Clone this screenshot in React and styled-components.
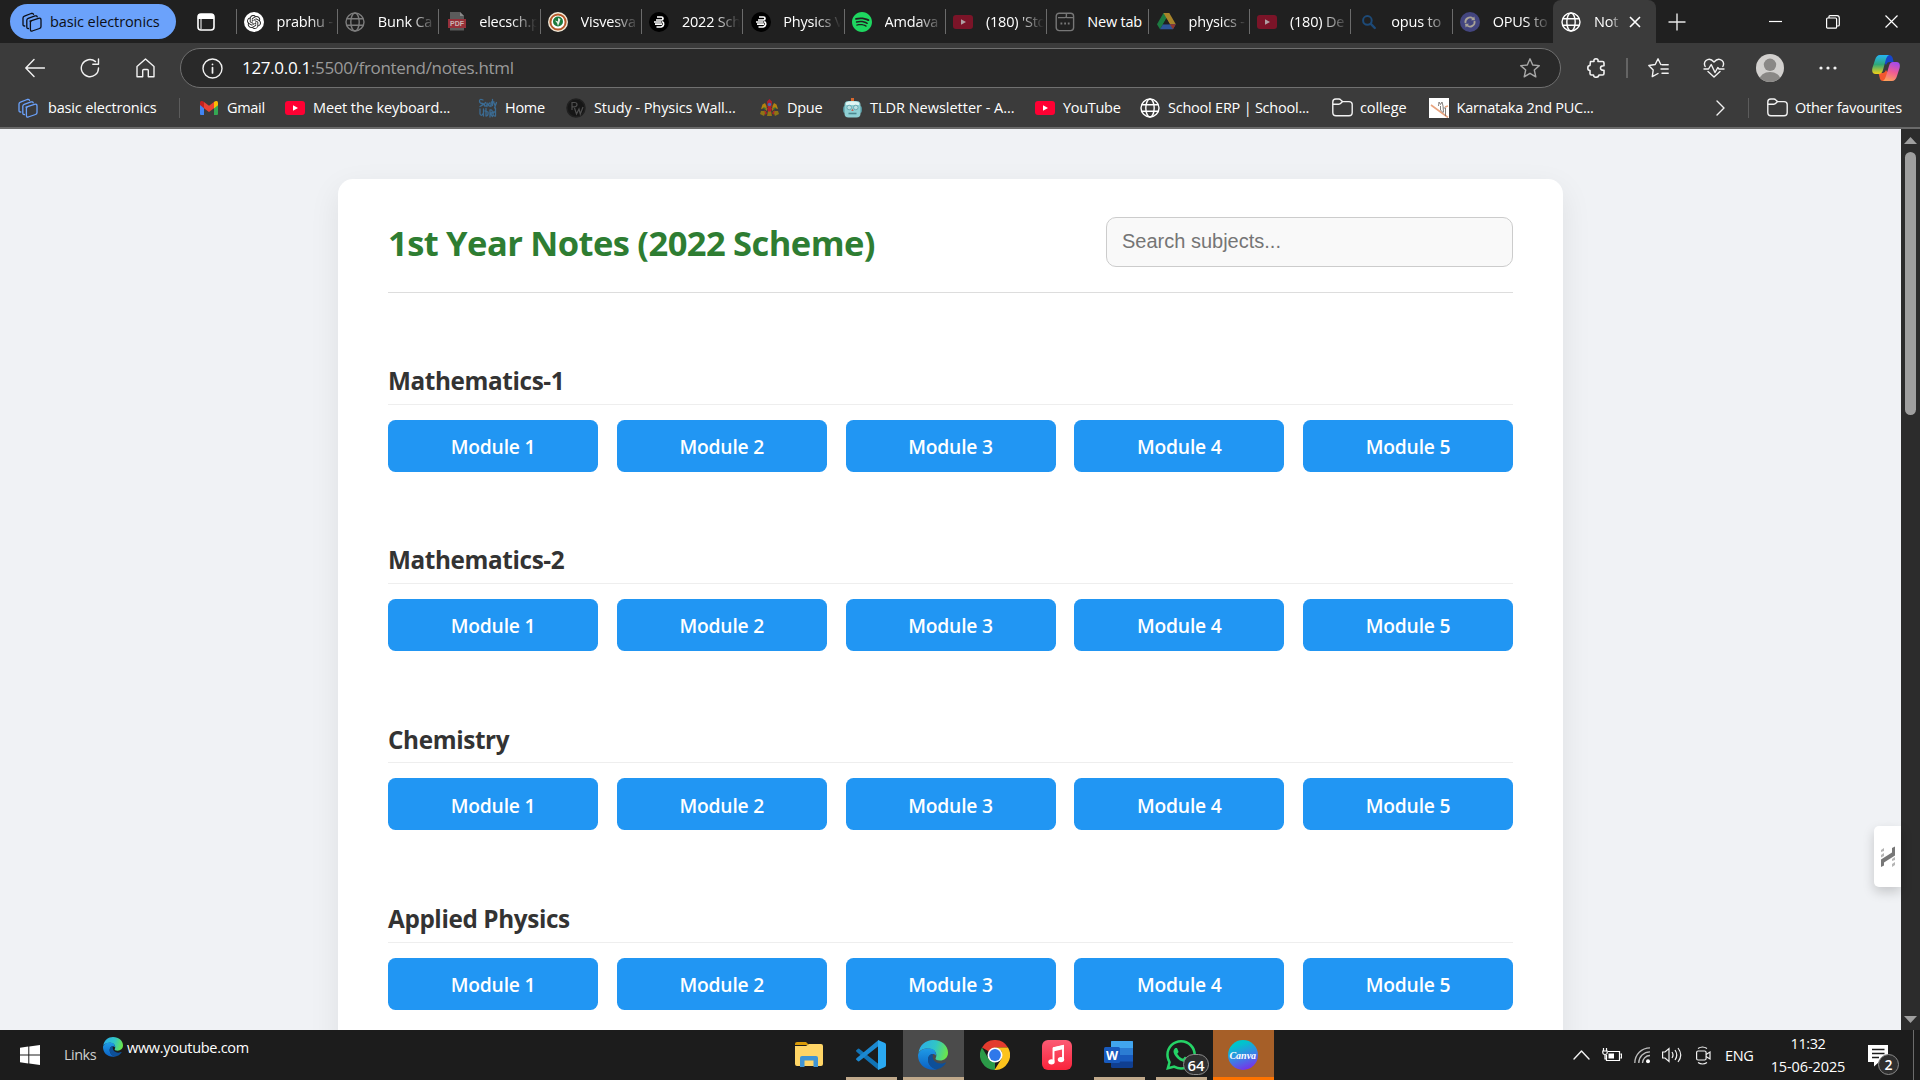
import React from "react";
import styled, { createGlobalStyle } from "styled-components";
import { SiOpenai, SiSpotify, SiWhatsapp } from "react-icons/si";

const ui = `"Open Sans", "Noto Sans", sans-serif`;

const Global = createGlobalStyle`
  * { box-sizing: border-box; }
  html, body { margin: 0; padding: 0; overflow: hidden; background: #1c1c1c; }
  body { font-family: ${ui}; }
`;

const Screen = styled.div`
  width: 1920px;
  height: 1080px;
  display: flex;
  flex-direction: column;
  overflow: hidden;
`;

/* ---------- tab strip ---------- */
const TabStrip = styled.header`
  height: 43px;
  flex: none;
  display: flex;
  align-items: stretch;
  background: #202020;
`;
const WorkspacePill = styled.button`
  margin: 4px 0 4px 10px;
  width: 166px;
  height: 35px;
  padding: 0 0 0 12px;
  border: 0;
  border-radius: 18px;
  background: #6ba2fb;
  display: flex;
  align-items: center;
  gap: 8px;
  font: 14.5px ${ui};
  letter-spacing: -0.1px;
  color: #0c0f16;
  white-space: nowrap;
`;
const TabActions = styled.div`
  width: 59.5px;
  display: grid;
  place-items: center;
  color: #fff;
`;
const Tab = styled.div`
  width: 101.35px;
  flex: none;
  display: flex;
  align-items: center;
  position: relative;
  padding-left: 8.5px;
  &::before {
    content: "";
    position: absolute;
    left: 0;
    top: 9px;
    width: 1px;
    height: 25px;
    background: #6b6b6b;
  }
`;
const ActiveTab = styled(Tab)`
  width: 103px;
  background: #3b3b3b;
  border-radius: 8px 8px 0 0;
  &::before { display: none; }
`;
const TabIcon = styled.span`
  width: 20px;
  height: 20px;
  flex: none;
  display: grid;
  place-items: center;
`;
const TabTitle = styled.span`
  margin-left: 12.5px;
  width: ${(p) => p.$w || 58}px;
  white-space: nowrap;
  font-size: 14.5px;
  line-height: 22px;
  letter-spacing: -0.2px;
  color: #fff;
  mask-image: ${(p) => (p.$full ? "none" : "linear-gradient(90deg, #000 55%, transparent 100%)")};
`;
const TabClose = styled.span`
  margin-left: 7.5px;
  display: flex;
`;
const NewTab = styled.span`
  width: 43px;
  display: grid;
  place-items: center;
`;
const WindowControls = styled.div`
  margin-left: auto;
  display: flex;
`;
const WinButton = styled.span`
  width: 58px;
  display: grid;
  place-items: center;
`;

/* ---------- toolbar ---------- */
const Toolbar = styled.div`
  height: 49px;
  flex: none;
  display: flex;
  align-items: center;
  padding-left: 7px;
  background: #3b3b3b;
`;
const ToolButton = styled.span`
  width: ${(p) => p.$w || 55}px;
  height: 40px;
  padding-left: ${(p) => p.$pad || 0}px;
  display: grid;
  place-items: center;
  flex: none;
`;
const AddressBar = styled.div`
  width: 1381px;
  flex: none;
  height: 40px;
  margin-left: 7px;
  margin-top: 1px;
  border: 1px solid #707070;
  border-radius: 20px;
  background: #292929;
  display: flex;
  align-items: center;
  padding: 0 20px 0 21px;
`;
const Url = styled.span`
  margin: 0 0 2px 19px;
  flex: 1;
  font-size: 17px;
  letter-spacing: -0.32px;
  color: #9a9a9a;
  b { font-weight: 400; color: #fff; }
`;
const ToolDivider = styled.span`
  width: 2px;
  flex: none;
  height: 20px;
  background: #646464;
`;

/* ---------- bookmarks ---------- */
const Bookmarks = styled.nav`
  height: 37px;
  flex: none;
  display: flex;
  align-items: center;
  padding: 0 0 4px 18px;
  background: #3b3b3b;
  border-bottom: 2px solid #6a6a6a;
`;
const Bookmark = styled.a`
  display: flex;
  align-items: center;
  gap: ${(p) => p.$gap ?? 8}px;
  width: ${(p) => p.$w}px;
  flex: none;
  white-space: nowrap;
  font-size: 14.5px;
  letter-spacing: ${(p) => p.$ls ?? -0.3}px;
  color: #fff;
`;
const BookIcon = styled.span`
  width: 20px;
  height: 20px;
  flex: none;
  display: grid;
  place-items: center;
`;
const BookDivider = styled.span`
  width: 1px;
  height: 20px;
  background: #5c5c5c;
  margin-right: ${(p) => p.$gap || 18}px;
`;
const Overflow = styled.span`
  margin-left: auto;
  width: 32px;
  display: flex;
`;

/* ---------- page ---------- */
const Viewport = styled.div`
  height: 901px;
  flex: none;
  display: flex;
  overflow: hidden;
  position: relative;
`;
const Page = styled.main`
  flex: 1;
  background: #f0f2f5;
  padding-top: 50px;
  overflow: hidden;
`;
const Card = styled.section`
  width: 1225px;
  height: 1100px;
  margin: 0 auto;
  padding: 37.5px 50px;
  border-radius: 15px;
  background: #fff;
  box-shadow: 0 10px 31px rgba(0, 0, 0, 0.08);
`;
const Header = styled.div`
  display: flex;
  justify-content: space-between;
  align-items: center;
  height: 76px;
  padding-bottom: 25px;
  border-bottom: 1px solid #ddd;
  margin-bottom: 63px;
`;
const Title = styled.h1`
  margin: 1px 0 0;
  font-size: 34.5px;
  font-weight: 700;
  letter-spacing: -0.55px;
  word-spacing: -0.5px;
  color: #2e7d32;
  white-space: nowrap;
`;
const Search = styled.input`
  width: 407px;
  height: 50px;
  border: 1px solid #ccc;
  border-radius: 10px;
  background: #f9f9f9;
  padding: 0 15px;
  font: 20px "Liberation Sans", Arial, sans-serif;
  &::placeholder { color: #757575; opacity: 1; }
`;
const Subject = styled.section`
  height: 179.4px;
`;
const SubjectTitle = styled.h2`
  margin: 0 0 15px;
  height: 49px;
  padding-top: 8.6px;
  border-bottom: 1px solid #eee;
  font-size: 24.3px;
  line-height: 34px;
  font-weight: 700;
  letter-spacing: -0.38px;
  color: #333;
`;
const Modules = styled.div`
  display: grid;
  grid-template-columns: repeat(5, 1fr);
  gap: 18.75px;
`;
const Module = styled.button`
  height: 52px;
  border: 0;
  padding: 2px 0 0;
  border-radius: 7.5px;
  background: #2196f3;
  color: #fff;
  font: 600 19.3px ${ui};
  letter-spacing: -0.2px;
`;
const Scrollbar = styled.div`
  width: 19px;
  flex: none;
  background: #2c2c2c;
  display: flex;
  flex-direction: column;
  align-items: center;
  padding: 8px 0 7px;
`;
const Thumb = styled.div`
  width: 11px;
  height: 263px;
  margin: 8px 0 auto;
  border-radius: 6px;
  background: #9f9f9f;
`;
const SideWidget = styled.div`
  position: absolute;
  right: 19px;
  top: 697px;
  width: 27px;
  height: 61px;
  border-radius: 5px 0 0 5px;
  background: #fff;
  box-shadow: 0 5px 12px rgba(0, 0, 0, 0.18);
  display: grid;
  place-items: center;
`;

/* ---------- taskbar ---------- */
const Taskbar = styled.footer`
  height: 50px;
  flex: none;
  display: flex;
  background: #1c1c1c;
  color: #fff;
`;
const LinksArea = styled.div`
  width: 779px;
  display: flex;
  padding-left: 20px;
`;
const StartButton = styled.span`
  width: 44px;
  padding-top: 15px;
`;
const LinksLabel = styled.span`
  width: 39px;
  padding-top: 15px;
  font-size: 14.5px;
  line-height: 20px;
  letter-spacing: -0.5px;
  color: #cfcfcf;
`;
const LinkItem = styled.span`
  display: flex;
  height: 20px;
  margin-top: 7px;
  gap: 4px;
  font-size: 14.5px;
  line-height: 21px;
  letter-spacing: -0.3px;
`;
const AppButton = styled.span`
  width: 61px;
  margin-right: 1px;
  padding-right: 1.5px;
  display: grid;
  place-items: center;
  position: relative;
  background: ${(p) => p.$bg || "transparent"};
  &::after {
    content: "";
    position: absolute;
    bottom: 0;
    left: ${(p) => (p.$bg ? 0 : 5)}px;
    right: ${(p) => (p.$bg ? 0 : 5)}px;
    height: 3px;
    background: ${(p) => p.$line || "transparent"};
  }
`;
const Badge = styled.span`
  position: absolute;
  right: ${(p) => p.$right}px;
  bottom: 5px;
  width: ${(p) => p.$w}px;
  height: 21px;
  border: 1px solid #8a8a8a;
  border-radius: 11px;
  background: #2f2f2f;
  display: grid;
  place-items: center;
  font-size: ${(p) => p.$size || 14}px;
  font-weight: 600;
  line-height: 18px;
`;
const CanvaLogo = styled.span`
  width: 30px;
  height: 30px;
  border-radius: 50%;
  background: linear-gradient(160deg, #00c4cc 20%, #3b82e6 55%, #7d2ae8 92%);
  display: grid;
  place-items: center;
  font: italic 700 10px "Liberation Serif", serif;
  color: #fff;
`;
const Tray = styled.div`
  margin-left: auto;
  display: flex;
  align-items: center;
  width: 347px;
`;
const TrayItem = styled.span`
  width: ${(p) => p.$w}px;
  flex: none;
  display: flex;
  font-size: 14.5px;
  letter-spacing: -0.4px;
`;
const Clock = styled.div`
  width: 76px;
  text-align: center;
  font-size: 14.5px;
  line-height: 23px;
  letter-spacing: -0.1px;
  white-space: nowrap;
  div:first-child { letter-spacing: -0.4px; }
`;
const Notifications = styled.span`
  position: relative;
  width: 45px;
  height: 50px;
  margin-left: 22px;
  padding-top: 15px;
`;
const DesktopEdge = styled.span`
  width: 1px;
  height: 50px;
  background: #6b6b6b;
`;

/* ---------- drawings ---------- */
const Drawing = styled.svg`
  display: block;
`;
const Svg = ({ s = 20, w, h, vb, children, ...r }) => (
  <Drawing width={w || s} height={h || s} viewBox={vb || `0 0 ${w || s} ${h || s}`} fill="none" {...r}>
    {children}
  </Drawing>
);
const line = { stroke: "#f2f2f2", strokeWidth: 1.4, strokeLinecap: "round", strokeLinejoin: "round" };

const Workspace = ({ c }) => (
  <Svg stroke={c} strokeWidth="1.3" strokeLinejoin="round" strokeLinecap="round">
    <path d="M8 9.2 L16.5 6.3 Q19 5.6 19 8 V14.5 Q19 16 17.5 16.5 L10.2 19 Q8.4 19.5 8.4 17.6 V10.4 Q8.4 9.3 9.4 8.8" />
    <path d="M6.5 16.5 Q4.8 16.8 4.8 15 V8.2 Q4.8 6.8 6.2 6.3 L13 3.9 Q14.8 3.4 15.2 4.9" />
    <path d="M2.8 14 Q1 14.2 1 12.5 V6 Q1 4.6 2.4 4.1 L9.2 1.5 Q11 1 11.5 2.4" />
  </Svg>
);
const Globe = ({ c = "#fff" }) => (
  <Svg stroke={c} strokeWidth="1.4">
    <circle cx="10" cy="10" r="9" />
    <ellipse cx="10" cy="10" rx="4.2" ry="9" />
    <path d="M1.8 6.8H18.2M1.8 13.2H18.2" />
  </Svg>
);
const Youtube = ({ dim }) => (
  <Svg w={20} h={14}>
    <rect width="20" height="14" rx="3" fill={dim ? "#7b1428" : "#ff0033"} />
    <path d="M8 4.2 13 7 8 9.8Z" fill={dim ? "#b0a0a4" : "#fff"} />
  </Svg>
);
const Pdf = () => (
  <Svg w={20} h={20}>
    <path d="M3 0H13L17 4V10H3Z" fill="#5b5b5b" />
    <path d="M13 0V4H17Z" fill="#8a8a8a" />
    <rect x="1" y="7" width="18" height="9" fill="#96303a" />
    <rect x="3" y="16" width="14" height="2.5" fill="#5b5b5b" />
    <text x="10" y="14" fontSize="7" fontWeight="700" textAnchor="middle" fill="#c9b4b4" fontFamily="Liberation Sans">PDF</text>
  </Svg>
);
const Crest = () => (
  <Svg>
    <circle cx="10" cy="10" r="10" fill="#f3ead8" />
    <circle cx="10" cy="10" r="7.6" fill="#fff" stroke="#b5592a" strokeWidth="2" />
    <circle cx="10" cy="9.5" r="5" fill="#1d7a3c" />
    <path d="M10 14 9 11 7 8.500 10 9.500 10 6 12.500 7 11.300 11Z" fill="#e8f1e6" />
  </Svg>
);
const Bee = () => (
  <Svg>
    <circle cx="10" cy="10" r="10" fill="#000" />
    <path d="M8 5H12.5Q14 5 14 6.4T12.6 8H7M5 10H12.5M7 8H12M6 12.2H13M13.2 9.5Q15 10.5 14.6 12.5T12 15H7.5" stroke="#fff" strokeWidth="1.7" />
  </Svg>
);
const NewTabPage = () => (
  <Svg stroke="#777" strokeWidth="1.4">
    <rect x="1.2" y="1.2" width="17.4" height="17.4" rx="3" />
    <path d="M3 5.6H10Q11.4 5.6 11.4 4.2V2M11.4 5.6H18.5" />
    <path d="M5.5 11.5H7.3M9.2 11.5H11M12.8 11.5H14.6" strokeWidth="2" />
  </Svg>
);
const Drive = () => (
  <Svg w={19} h={17}>
    <path d="M6.5 0H12.3L6 11.2 3 16.2 0 11.2Z" fill="#1c7a41" />
    <path d="M6.5 0H12.3L18.8 11.2H12.8Z" fill="#a8842a" />
    <path d="M6 11.2H18.8L16 16.2H3Z" fill="#2d5599" />
    <path d="M16 16.2 18.8 11.2H12.8Z" fill="#93352c" />
    <path d="M9.4 5.4 12.8 11.2H6Z" fill="#202020" />
  </Svg>
);
const Magnifier = () => (
  <Svg w={16} h={16} stroke="#1d4a78" strokeLinecap="round">
    <circle cx="6.4" cy="6.4" r="4.3" strokeWidth="2" />
    <path d="M9.8 9.8 13.8 14" strokeWidth="2.4" />
  </Svg>
);
const Convert = () => (
  <Svg>
    <circle cx="10" cy="10" r="10" fill="#43457f" />
    <path d="M5.5 11A4.6 4.6 0 0 1 13 6.6M14.5 9A4.6 4.6 0 0 1 7 13.4" stroke="#a9a397" strokeWidth="1.8" />
    <path d="M11 8.3 15 8.2 14.3 4.6ZM9 11.7 5 11.8 5.7 15.4Z" fill="#a9a397" />
  </Svg>
);
const Gmail = () => (
  <Svg w={18} h={14}>
    <path d="M0 2V13Q0 14 1 14H4V5Z" fill="#4285f4" />
    <path d="M18 2V13Q18 14 17 14H14V5Z" fill="#34a853" />
    <path d="M14 1 18 2V4L14 7.2Z" fill="#fbbc04" />
    <path d="M4 1 9 4.8 14 1V7.2L9 11 4 7.2Z" fill="#ea4335" />
    <path d="M0 2Q0-.8 3 .3L4 1V7.2L0 4Z" fill="#c5221f" />
    <path d="M18 2Q18-.8 15 .3L14 1V7.2L18 4Z" fill="#fbbc04" />
  </Svg>
);
const Scribble = () => (
  <Svg w={19} h={20} stroke="#3b6c94" strokeWidth="1.3" strokeLinecap="round" strokeLinejoin="round">
    <path d="M5 2Q1.500 .5 1.500 3T4.500 5.500 2 8.500M7.500 4.500Q5 8 7.500 8T9 5V8.500M11.500 5Q9.500 7.500 11.500 8T13 5V8.500M14.500 1.500V7.500M13.500 4H16M16 5 17 7.500 18.500 4.500 16.500 10" />
    <path d="M2 11V16Q3.500 19 5.500 15V11V18M8 10.500V18Q10.500 18 10 14L7 13M12 19V12Q15 11.500 14 15L12 15 14.500 18.500M17.500 10V18Q14 18.500 15.500 14L17.500 14" />
  </Svg>
);
const PW = () => (
  <Svg>
    <circle cx="10" cy="10" r="9" fill="#161616" stroke="#202020" strokeWidth="1.5" />
    <path d="M6 12V4.500H8.500Q11 4.500 11 6.500T8.500 8.800H6M8.500 10 10.500 16 13 11 14.300 16 17 9" stroke="#4f4f4f" strokeWidth="1.2" />
  </Svg>
);
const Emblem = () => (
  <Svg w={19} h={18}>
    <path d="M9.500 0 12 2.500 11.500 8 9.500 11 7.500 8 7 2.500Z" fill="#b3202b" />
    <path d="M5 4 2.500 5.500 1 10 4 9 7 12 6.500 7ZM14 4 16.500 5.500 18 10 15 9 12 12 12.500 7Z" fill="#b5810f" />
    <path d="M1 12H6L4 17 0 15ZM18 12H13L15 17 19 15ZM8 12H11L12 17H7Z" fill="#8f7414" />
    <path d="M4 11 7 14 5.500 16ZM15 11 12 14 13.500 16ZM7 9H12L11 12.500H8Z" fill="#b3202b" />
    <circle cx="9.500" cy="5.500" r="1.700" fill="#4968b0" />
    <path d="M3 8 6 9 5 11ZM16 8 13 9 14 11Z" fill="#2c7a35" />
  </Svg>
);
const Robot = () => (
  <Svg w={19} h={20}>
    <rect x="8" y="0" width="3" height="4" fill="#d8672d" />
    <rect x="0" y="8" width="19" height="7" rx="2" fill="#539098" />
    <rect x="1.5" y="3" width="16" height="16.500" rx="4" fill="#8fd0d4" />
    <path d="M3 4.500Q9 2 16 4.500V7H3Z" fill="#dff5f3" />
    <circle cx="6.200" cy="9.500" r="2.300" fill="#b9e0e2" stroke="#6ba9b2" />
    <circle cx="12.800" cy="9.500" r="2.300" fill="#b9e0e2" stroke="#6ba9b2" />
    <path d="M9.500 10.500 10.700 13H8.300Z" fill="#c56050" />
    <path d="M5.500 15.500H13.500" stroke="#4a8890" strokeWidth="1.600" />
  </Svg>
);
const Folder = () => (
  <Svg w={21} h={19} stroke="#f2f2f2" strokeWidth="1.4" strokeLinejoin="round">
    <path d="M.8 4Q.8 1 3.800 1H6.800Q8 1 8.800 1.900L10.500 3.600H17Q20.200 3.600 20.200 6.600V14.600Q20.200 17.800 17 17.800H4Q.8 17.800 .8 14.600Z" />
    <path d="M.8 6.200H6.800Q8 6.200 8.800 5.300L10.500 3.600" />
  </Svg>
);
const Sketch = () => (
  <Svg>
    <rect width="20" height="20" fill="#fff" />
    <path d="M2 7 19 19.500M16 9 19 8" stroke="#e9a47f" strokeWidth="1.600" />
    <path d="M9.500 8 10 4 11.500 6.500 13 4 14 8 14.500 14M11.500 8V12L14.500 15M16.500 10V18M14.500 10H16.500" stroke="#77726e" strokeWidth=".9" />
  </Svg>
);
const Edge = ({ s }) => (
  <Svg s={s} vb="0 0 30 30">
    <defs>
      <linearGradient id="eg" x1="0" y1=".3" x2="1" y2=".5"><stop offset="0" stopColor="#2aaeea" /><stop offset=".55" stopColor="#31c5c6" /><stop offset="1" stopColor="#6be649" /></linearGradient>
      <linearGradient id="eb" x1="0" y1="0" x2="0" y2="1"><stop offset="0" stopColor="#1f9be6" /><stop offset="1" stopColor="#0b61c4" /></linearGradient>
    </defs>
    <path d="M.5 13C1.500 5 8 0 15 0 24 0 30 6 30 12.500 30 18 26 20.500 22 20.500 18.500 20.500 17 19.500 17.600 18.300 19.800 14.500 17.500 9 11 8.500 5.500 8.300 1.500 10.500 .5 13Z" fill="url(#eg)" />
    <path d="M0 15.500C0 11.500 5 8.300 10.500 8.300 16.500 8.300 19 13 17.500 15.500 15.500 12.300 10 14.500 10 19.500 10 25 14.500 28.500 19 29.400 7.500 31.500 0 24 0 15.500Z" fill="url(#eb)" />
    <path d="M10 19.500C10 16 12.500 13.500 15 14 13.500 19 17 23.500 23 23.500 25.500 23.500 27.500 22 28.200 22.600 26 26.500 22 29 18.500 29.400 14 28.500 10 25 10 19.500Z" fill="#0d4f98" />
  </Svg>
);
const Copilot = () => (
  <Svg w={28} h={26}>
    <defs>
      <linearGradient id="c1" x1="0" y1="0" x2="0" y2="1"><stop offset="0" stopColor="#25b5f5" /><stop offset=".5" stopColor="#30a878" /><stop offset="1" stopColor="#f2d117" /></linearGradient>
      <linearGradient id="c2" x1=".6" y1="0" x2=".3" y2="1"><stop offset="0" stopColor="#a64bea" /><stop offset=".5" stopColor="#f05c93" /><stop offset="1" stopColor="#fba05b" /></linearGradient>
    </defs>
    <path d="M14 0H17Q20 0 21 4L21.500 7H17Q15 7 14 10L11 6Z" fill="#1746c9" />
    <path d="M14 26H11Q8 26 7.500 22L6.500 18H11Q13 18 14 15L17 20Z" fill="#f2572e" />
    <path d="M8 0H17Q15 1 14 4L11 15Q10 19 6.500 19H3.500Q-.8 19 .4 13L3 5Q4.500 0 8 0Z" fill="url(#c1)" />
    <path d="M20 26H11Q13 25 14 21L17 11Q18 7 21 7H24.500Q28.800 7 27.600 13L25 21Q23.500 26 20 26Z" fill="url(#c2)" />
  </Svg>
);

const tabs = [
  { icon: <Svg><circle cx="10" cy="10" r="10" fill="#fff" /><SiOpenai x="3" y="3" size={14} color="#222" /></Svg>, title: "prabhu -" },
  { icon: <Globe c="#7c7c7c" />, title: "Bunk Ca" },
  { icon: <Pdf />, title: "elecsch.p" },
  { icon: <Crest />, title: "Visvesva" },
  { icon: <Bee />, title: "2022 Sch" },
  { icon: <Bee />, title: "Physics V" },
  { icon: <SiSpotify size={20} color="#1ed760" />, title: "Amdava" },
  { icon: <Youtube dim />, title: "(180) 'Sto" },
  { icon: <NewTabPage />, title: "New tab", full: true },
  { icon: <Drive />, title: "physics -" },
  { icon: <Youtube dim />, title: "(180) De" },
  { icon: <Magnifier />, title: "opus to" },
  { icon: <Convert />, title: "OPUS to" },
];

const bookmarks = [
  { icon: <Gmail />, label: "Gmail", w: 86, ls: -0.3 },
  { icon: <Youtube />, label: "Meet the keyboard...", w: 192, ls: -0.09 },
  { icon: <Scribble />, label: "Home", w: 89 },
  { icon: <PW />, label: "Study - Physics Wall...", w: 193, ls: -0.08 },
  { icon: <Emblem />, label: "Dpue", w: 83 },
  { icon: <Robot />, label: "TLDR Newsletter - A...", w: 193, ls: -0.02 },
  { icon: <Youtube />, label: "YouTube", w: 105 },
  { icon: <Globe />, label: "School ERP | School...", w: 192, ls: -0.23 },
  { icon: <Folder />, label: "college", w: 96.5, ls: -0.1 },
  { icon: <Sketch />, label: "Karnataka 2nd PUC...", w: 180, ls: -0.25 },
];

const subjects = ["Mathematics-1", "Mathematics-2", "Chemistry", "Applied Physics"];

export default function App() {
  return (
    <Screen>
      <Global />
      <TabStrip>
        <WorkspacePill><Workspace c="#0c0f16" />basic electronics</WorkspacePill>
        <TabActions>
          <Svg w={18} h={18}><rect x="1" y="1" width="16" height="16" rx="3" stroke="#fff" strokeWidth="1.6" /><path d="M1 6V3.500Q1 1 3.500 1H14.500Q17 1 17 3.500V6Z" fill="#fff" /><path d="M4 6V16" stroke="#fff" /></Svg>
        </TabActions>
        {tabs.map((t, i) => (
          <Tab key={i}><TabIcon>{t.icon}</TabIcon><TabTitle $full={t.full}>{t.title}</TabTitle></Tab>
        ))}
        <ActiveTab>
          <TabIcon><Globe /></TabIcon>
          <TabTitle $w={28}>Not</TabTitle>
          <TabClose><Svg w={12} h={12} stroke="#fff" strokeWidth="1.6"><path d="M1 1 11 11M11 1 1 11" /></Svg></TabClose>
        </ActiveTab>
        <NewTab><Svg w={18} h={18} stroke="#e8e8e8" strokeWidth="1.4"><path d="M9 .5V17.500M.5 9H17.500" /></Svg></NewTab>
        <WindowControls>
          <WinButton><Svg w={13} h={13} stroke="#fff" strokeWidth="1.2"><path d="M0 6.500H13" /></Svg></WinButton>
          <WinButton><Svg w={14} h={14} stroke="#fff" strokeWidth="1.2"><rect x=".6" y="3" width="10" height="10.200" rx="1" /><path d="M3 3V1.600Q3 .6 4 .6H11Q13.300 .6 13.300 3V10Q13.300 11 12 11H10.800" /></Svg></WinButton>
          <WinButton><Svg w={13} h={13} stroke="#fff" strokeWidth="1.2"><path d="M.5 .5 12.500 12.500M12.500 .5 .5 12.500" /></Svg></WinButton>
        </WindowControls>
      </TabStrip>

      <Toolbar>
        <ToolButton><Svg {...line}><path d="M19.500 10H1M9 1.500 .8 10 9 18.500" /></Svg></ToolButton>
        <ToolButton><Svg {...line}><path d="M18.500 10A8.600 8.600 0 1 1 15.500 3.600M18.500 1V6.200H12.800" /></Svg></ToolButton>
        <ToolButton $w={56}><Svg w={19} h={20} {...line}><path d="M1 8.500 9.500 1 18 8.500V18.800H12.300V12.500Q12.300 11.500 11.300 11.500H7.700Q6.700 11.500 6.700 12.500V18.800H1Z" /></Svg></ToolButton>
        <AddressBar>
          <Svg w={21} h={21} {...line}><circle cx="10.500" cy="10.500" r="9.500" /><path d="M10.500 9.500V15M10.500 6.300V6.400" strokeWidth="1.7" /></Svg>
          <Url><b>127.0.0.1</b>:5500/frontend/notes.html</Url>
          <Svg {...line} stroke="#a8a8a8"><path d="M10 .8 12.700 7 19.300 7.600 14.300 12 15.800 18.800 10 15.300 4.200 18.800 5.700 12 .7 7.600 7.300 7Z" /></Svg>
        </AddressBar>
        <ToolButton $w={65} $pad={5}>
          <Svg w={19} h={20} {...line} strokeWidth="1.6"><path d="M3.500 3.500H7Q6.500 .8 9 .8T11 3.500H15.500Q17 3.500 17 5V7.800Q13.500 7.500 13.500 10T17 12.200V15.500Q17 17 15.500 17H12Q11.500 19.300 9 19.300T6.500 17H4.500Q3 17 3 15.500V12.500Q.8 12.500 .8 10T3 7.500Z" /></Svg>
        </ToolButton>
        <ToolDivider />
        <ToolButton $w={60}><Svg w={21} h={20} {...line}><path d="M12.800 6.500 10 .8 7.200 6.500 .8 7.500 5.200 12 4.300 18.600 10 15.500M14 6.800H20.200M13 11H20.200M14 15.200H20.200" /></Svg></ToolButton>
        <ToolButton $w={51}><Svg w={22} h={20} {...line}><path d="M2.200 8.500Q.3 5 3 2.500 7-.8 11 4 15-.8 19 2.500 21.700 5 19.800 8.500M5 13.500 11 19 17 13.500M1 11H5.500L8.200 6.500 12 14.500 14.800 9.500 16 11H21" /></Svg></ToolButton>
        <ToolButton $w={61}>
          <Svg w={28} h={28}><defs><clipPath id="av"><circle cx="14" cy="14" r="14" /></clipPath></defs><g clipPath="url(#av)"><rect width="28" height="28" fill="#d2d0ce" /><circle cx="14" cy="10.800" r="6.200" fill="#8a8886" /><ellipse cx="14" cy="26" rx="10.500" ry="8" fill="#8a8886" /></g></Svg>
        </ToolButton>
        <ToolButton $w={55}><Svg w={18} h={4}><circle cx="2" cy="2" r="1.600" fill="#f2f2f2" /><circle cx="9" cy="2" r="1.600" fill="#f2f2f2" /><circle cx="16" cy="2" r="1.600" fill="#f2f2f2" /></Svg></ToolButton>
        <ToolButton $w={61}><Copilot /></ToolButton>
      </Toolbar>

      <Bookmarks>
        <Bookmark $w={161} $gap={10} $ls={-0.17}><BookIcon><Workspace c="#6ba2fb" /></BookIcon>basic electronics</Bookmark>
        <BookDivider $gap={19} />
        {bookmarks.map((b) => (
          <Bookmark key={b.label} $w={b.w} $ls={b.ls}><BookIcon>{b.icon}</BookIcon>{b.label}</Bookmark>
        ))}
        <Overflow><Svg w={9} h={16} {...line}><path d="M1 1 8 8 1 15" /></Svg></Overflow>
        <BookDivider />
        <Bookmark $w={153} $ls={-0.24}><BookIcon><Folder /></BookIcon>Other favourites</Bookmark>
      </Bookmarks>

      <Viewport>
        <Page>
          <Card>
            <Header>
              <Title>1st Year Notes (2022 Scheme)</Title>
              <Search placeholder="Search subjects..." />
            </Header>
            {subjects.map((s) => (
              <Subject key={s}>
                <SubjectTitle>{s}</SubjectTitle>
                <Modules>
                  {[1, 2, 3, 4, 5].map((n) => <Module key={n}>Module {n}</Module>)}
                </Modules>
              </Subject>
            ))}
          </Card>
        </Page>
        <SideWidget>
          <Svg w={16} h={22}><path d="M1 21V13.500L12 6.500V2L15 .5V9.500L4 16.500V19.500Z" fill="#777" /><path d="M1 4 4 2V5L1 6ZM1 9 4 7V10L1 11.500ZM12 13 15 11V14L12 15ZM12 18 15 16V19L12 21Z" fill="#b5b5b5" /></Svg>
        </SideWidget>
        <Scrollbar>
          <Svg w={13} h={7}><path d="M6.500 0 13 7H0Z" fill="#9f9f9f" /></Svg>
          <Thumb />
          <Svg w={13} h={7}><path d="M0 0H13L6.500 7Z" fill="#9f9f9f" /></Svg>
        </Scrollbar>
      </Viewport>

      <Taskbar>
        <LinksArea>
          <StartButton><Svg><path d="M0 2.800 8.300 1.600V9.500H0ZM9.300 1.400 20 0V9.500H9.300ZM0 10.500H8.300V18.400L0 17.200ZM9.300 10.500H20V20L9.300 18.600Z" fill="#fff" /></Svg></StartButton>
          <LinksLabel>Links</LinksLabel>
          <LinkItem><Edge s={20} />www.youtube.com</LinkItem>
        </LinksArea>
        <AppButton>
          <Svg w={28} h={26}><path d="M0 2Q0 0 2 0H11L14 3H0Z" fill="#d99a07" /><path d="M0 4H11L14 2H26Q28 2 28 4V22Q28 24 26 24H2Q0 24 0 22Z" fill="#ffd566" /><path d="M5 25V16Q5 14 7 14H21Q23 14 23 16V25H18.500V18.500H9.500V25Z" fill="#3f94d4" /></Svg>
        </AppButton>
        <AppButton $line="#c0a98b">
          <Svg w={30} h={30}><path d="M0 10.500 2 8.800Q2.700 8.300 3.500 8.900L22.500 24V30L1 12.200Q0 11.500 0 10.500Z" fill="#1173b5" /><path d="M0 19.500 2 21.200Q2.700 21.700 3.500 21.100L22.500 6V0L1 17.800Q0 18.500 0 19.500Z" fill="#1b88d0" /><path d="M22 0 29 3Q30 3.500 30 5V25Q30 26.500 29 27L22 30Z" fill="#2aa9f2" /></Svg>
        </AppButton>
        <AppButton $bg="#4b4b4b" $line="#c0a98b"><Edge s={30} /></AppButton>
        <AppButton>
          <Svg w={30} h={30}><path d="M15 15 2 7.500A15 15 0 0 1 28 7.500H15Z" fill="#e33b2e" /><path d="M2 7.500 8.500 18.800 15 22.500 15 30A15 15 0 0 1 2 7.500Z" fill="#2b9a48" /><path d="M28 7.500A15 15 0 0 1 14.500 30L21.500 18.800 21.500 11 15 7.500Z" fill="#fcc31c" /><circle cx="15" cy="15" r="7.500" fill="#fff" /><circle cx="15" cy="15" r="5.900" fill="#2f78ea" /></Svg>
        </AppButton>
        <AppButton>
          <Svg w={30} h={30}><defs><linearGradient id="mu" x1="0" y1="0" x2="0" y2="1"><stop stopColor="#fb5b74" /><stop offset="1" stopColor="#fa233b" /></linearGradient></defs><rect width="30" height="30" rx="6" fill="url(#mu)" /><path d="M11.500 21V8.500L21 6.200V19" stroke="#fff" strokeWidth="1.900" /><path d="M11 7.300 22 4.800V9L11 11.500Z" fill="#fff" /><ellipse cx="9.500" cy="21.800" rx="3.200" ry="2.600" fill="#fff" /><ellipse cx="19" cy="19.600" rx="3.200" ry="2.600" fill="#fff" /></Svg>
        </AppButton>
        <AppButton $line="#c0a98b">
          <Svg w={30} h={28}><rect x="7" width="22" height="27" rx="1.500" fill="#103f91" /><rect x="7" width="22" height="20.500" fill="#185abd" /><rect x="7" width="22" height="14" fill="#2b7cd3" /><path d="M7 1.500Q7 0 8.500 0H27.500Q29 0 29 1.500V7H7Z" fill="#41a5ee" /><rect x="0" y="6" width="16" height="16" rx="1.500" fill="#185abd" /><text x="8" y="18.500" textAnchor="middle" fontFamily="Open Sans" fontWeight="700" fontSize="12.500" fill="#fff">W</text></Svg>
        </AppButton>
        <AppButton $line="#c0a98b"><SiWhatsapp size={30} color="#25d366" /><Badge $right={3} $w={26} $size={15}>64</Badge></AppButton>
        <AppButton $bg="#a65f28" $line="#ff7300"><CanvaLogo>Canva</CanvaLogo></AppButton>
        <Tray>
          <TrayItem $w={29}><Svg w={17} h={10} {...line}><path d="M1 9 8.500 1 16 9" /></Svg></TrayItem>
          <TrayItem $w={32}><Svg w={20} h={14} stroke="#fff" strokeWidth="1.200"><path d="M6 3.500H17.500V12.500H4.500V7M18.500 6.200H19.500V9.800H18.500M1.500 0V2.500M4.500 0V2.500M.8 3H5.200V5Q5 6.500 3 6.500T.8 5ZM3 6.500V11H4.500" /><rect x="6.500" y="5.500" width="5.500" height="5" fill="#fff" stroke="none" /></Svg></TrayItem>
          <TrayItem $w={28}><Svg w={17} h={17} stroke="#bdbdbd" strokeWidth="1.300"><path d="M.8 16A15.200 15.200 0 0 1 16 .8M4.800 16A11.200 11.200 0 0 1 16 4.800M8.500 16A7.500 7.500 0 0 1 16 8.500" /><circle cx="14" cy="14.300" r="2" fill="#fff" stroke="none" /></Svg></TrayItem>
          <TrayItem $w={34}><Svg w={21} h={18} stroke="#f2f2f2" strokeWidth="1.200"><path d="M.6 6H3L7 2.500V15.500L3 12H.6ZM10 6Q12 9 10 12M13 4Q16.500 9 13 14M16 2Q21.500 9 16 16" /></Svg></TrayItem>
          <TrayItem $w={29}><Svg w={15} h={19} stroke="#f2f2f2" strokeWidth="1.200"><rect x=".6" y="5" width="9.500" height="9" rx="1.500" /><path d="M10 8.500 14 6V13L10 10.500M2 2.500Q6.500-.5 11 2.500M2 16.500Q6.500 19.500 11 16.500" /></Svg></TrayItem>
          <TrayItem $w={45}>ENG</TrayItem>
          <Clock><div>11:32</div><div>15-06-2025</div></Clock>
          <Notifications>
            <Svg w={21} h={22}><path d="M0 0H20V17H11L6 21.500V17H0Z" fill="#fff" /><path d="M4 4.500H16.500M4 8.500H16.500M4 12.500H11" stroke="#1c1c1c" strokeWidth="1.300" /></Svg>
            <Badge $right={14} $w={21}>2</Badge>
          </Notifications>
          <DesktopEdge />
        </Tray>
      </Taskbar>
    </Screen>
  );
}
